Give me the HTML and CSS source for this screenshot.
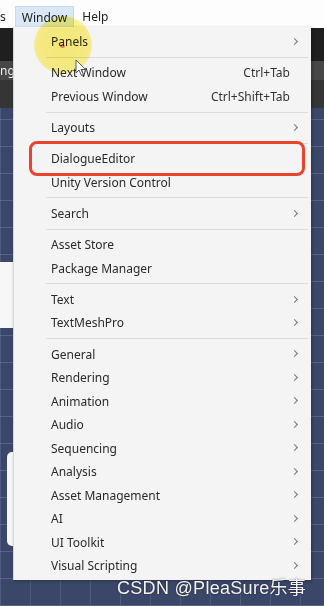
FILE: index.html
```html
<!DOCTYPE html>
<html lang="en">
<head>
  <meta charset="UTF-8" />
  <meta name="viewport" content="width=device-width, initial-scale=1.0"/>
  <title>Window Menu</title>
  <link rel="stylesheet" href="styles.css">
</head>
<body>
  <div class="menubar">
    <span class="menubar-item cut">s</span>
    <span class="menubar-item active">Window</span>
    <span class="menubar-item">Help</span>
  </div>

  <div class="workspace">
    <div class="toolbar"></div>
    <div class="tabbar"><span class="tab-text">ng</span></div>
    <div class="subbar"></div>
    <div class="scene">
      <div class="side-panel top"></div>
      <div class="side-panel bottom"></div>
    </div>

    <!-- dropdown menu over the editor -->
    <div class="dropdown">
      <div class="item sub">Panels</div>
      <div class="sep"></div>
      <div class="item"><span>Next Window</span><span class="shortcut">Ctrl+Tab</span></div>
      <div class="item"><span>Previous Window</span><span class="shortcut">Ctrl+Shift+Tab</span></div>
      <div class="sep"></div>
      <div class="item sub">Layouts</div>
      <div class="sep"></div>
      <div class="item">DialogueEditor</div>
      <div class="item">Unity Version Control</div>
      <div class="sep"></div>
      <div class="item sub">Search</div>
      <div class="sep"></div>
      <div class="item">Asset Store</div>
      <div class="item">Package Manager</div>
      <div class="sep"></div>
      <div class="item sub">Text</div>
      <div class="item sub">TextMeshPro</div>
      <div class="sep"></div>
      <div class="item sub">General</div>
      <div class="item sub">Rendering</div>
      <div class="item sub">Animation</div>
      <div class="item sub">Audio</div>
      <div class="item sub">Sequencing</div>
      <div class="item sub">Analysis</div>
      <div class="item sub">Asset Management</div>
      <div class="item sub">AI</div>
      <div class="item sub">UI Toolkit</div>
      <div class="item sub">Visual Scripting</div>

      <div class="highlight-box"></div>
      <div class="cursor-glow"></div>
      <svg class="pointer" width="12" height="18" viewBox="0 0 12 18">
        <path d="M1 1 L1 14 L4 11 L6.5 16.5 L8.5 15.5 L6 10.5 L10.5 10.5 Z" fill="#fff" stroke="#555" stroke-width="1"/>
      </svg>
    </div>

    <div class="watermark">CSDN @PleaSure乐事</div>
  </div>
</body>
</html>
```

FILE: styles.css
```css
body {
  margin: 0;
  width: 324px;
  height: 606px;
  overflow: hidden;
  font-family: "Noto Sans", "Open Sans", sans-serif;
  background-color: #3a4668;
}

.menubar {
  height: 28px;
  background-color: #fdfdfd;
  display: flex;
  align-items: flex-end;
  font-size: 12px;
  color: #222;
}

.menubar-item {
  height: 22px;
  line-height: 22px;
  padding: 0 6px;
  margin-right: 1px;
}

.menubar-item.cut {
  padding: 0 8px 0 0;
}

.menubar-item.active {
  background-color: #d9e7f6;
  border: 1px solid #c7dbf0;
  border-bottom: none;
  height: 21px;
  padding: 0 6px;
  margin-right: 2px;
}

.workspace {
  position: relative;
  height: 578px;
  display: flex;
  flex-direction: column;
}

.toolbar {
  height: 33px;
  background-color: #1f1f1f;
}

.tabbar {
  height: 19px;
  background-color: #474747;
  color: #f0f0f0;
  font-size: 12px;
  line-height: 19px;
}

.subbar {
  height: 28px;
  background-color: #353535;
}

.scene {
  flex: 1;
  position: relative;
  background-color: #3b4769;
  background-image:
    repeating-linear-gradient(0deg, rgba(150, 165, 205, 0.3) 0 1px, transparent 1px 27px),
    repeating-linear-gradient(90deg, rgba(150, 165, 205, 0.2) 0 1px, transparent 1px 30px);
}

.side-panel {
  position: absolute;
  background-color: #f7f7f7;
}

.side-panel.top {
  left: 0;
  top: 154px;
  width: 14px;
  height: 66px;
}

.side-panel.bottom {
  left: 7px;
  top: 344px;
  width: 10px;
  height: 94px;
  border-radius: 5px 0 0 5px;
}

.dropdown {
  position: absolute;
  left: 13px;
  top: -1px;
  width: 298px;
  height: 553px;
  box-sizing: border-box;
  padding-top: 3px;
  background-color: #f4f4f4;
  border-left: 1px solid #d6d6d6;
  box-shadow: 1px 1px 3px rgba(0, 0, 0, 0.3);
  font-size: 12px;
  color: #2a2a2a;
}

.item {
  height: 23.5px;
  display: flex;
  align-items: center;
  justify-content: space-between;
  padding: 0 21px 0 37px;
  position: relative;
}

.item.sub::after {
  content: "";
  position: absolute;
  right: 14px;
  top: 9px;
  width: 4px;
  height: 4px;
  border-top: 1.3px solid #777;
  border-right: 1.3px solid #777;
  transform: rotate(45deg);
}

.shortcut {
  color: #333;
}

.sep {
  height: 7.7px;
  display: flex;
  align-items: center;
  margin: 0 3px 0 32px;
}

.sep::before {
  content: "";
  flex: 1;
  height: 1px;
  background-color: #dcdcdc;
}

.highlight-box {
  position: absolute;
  left: 15px;
  top: 114px;
  width: 276px;
  height: 35px;
  box-sizing: border-box;
  border: 3px solid #e8432c;
  border-radius: 8px;
}

.cursor-glow {
  position: absolute;
  left: 20px;
  top: -11px;
  width: 58px;
  height: 58px;
  border-radius: 50%;
  mix-blend-mode: multiply;
  background: radial-gradient(circle, #fff27a 0%, #fff48a 62%, rgba(255, 248, 170, 0) 100%);
}

.cursor-glow::after {
  content: "";
  position: absolute;
  left: 26px;
  top: 28px;
  width: 5px;
  height: 4px;
  border-radius: 50%;
  background-color: rgba(220, 80, 80, 0.7);
}

.pointer {
  position: absolute;
  left: 61px;
  top: 32px;
}

.watermark {
  position: absolute;
  left: 117px;
  top: 545px;
  font-family: "Liberation Sans", "Noto Sans CJK SC", sans-serif;
  font-size: 18px;
  color: #f4f4f4;
  text-shadow: 0 0 2px rgba(0, 0, 0, 0.6);
  letter-spacing: 0.3px;
}
```
